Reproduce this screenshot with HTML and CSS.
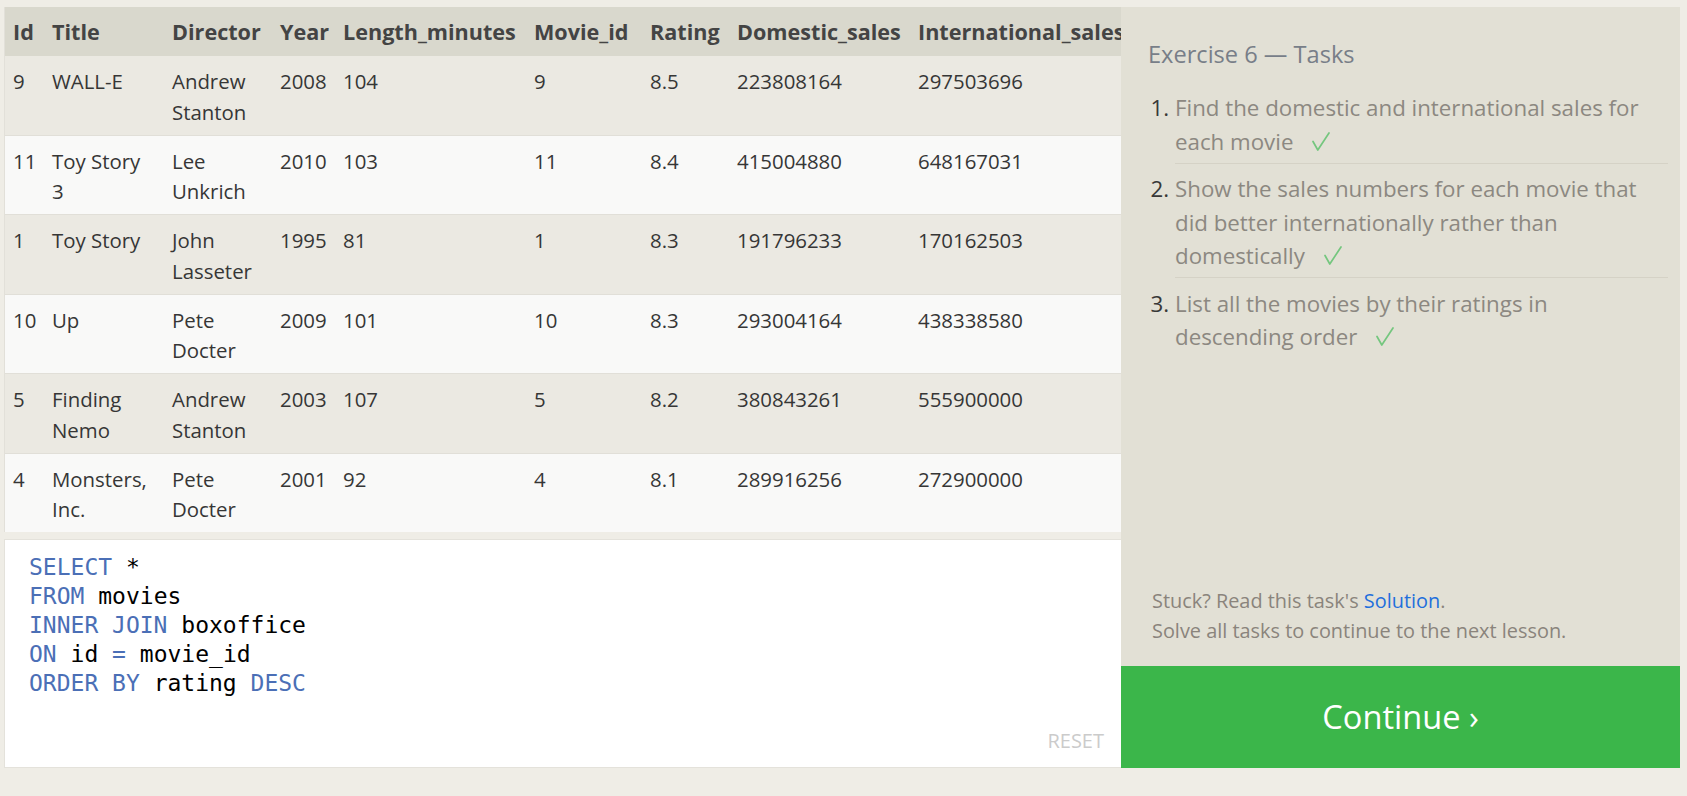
FILE: index.html
```html
<!DOCTYPE html>
<html lang="en">
<head>
<meta charset="utf-8">
<title>SQL Lesson — Exercise 6</title>
<link rel="stylesheet" href="styles.css">
</head>
<body>
<div class="app">
  <main class="workspace">
    <div class="results">
      <table class="results-table">
        <colgroup>
          <col class="c-id"><col class="c-title"><col class="c-director"><col class="c-year"><col class="c-length"><col class="c-movie"><col class="c-rating"><col class="c-dom"><col class="c-intl">
        </colgroup>
        <thead>
          <tr><th>Id</th><th>Title</th><th>Director</th><th>Year</th><th>Length_minutes</th><th>Movie_id</th><th>Rating</th><th>Domestic_sales</th><th>International_sales</th></tr>
        </thead>
        <tbody>
          <tr><td>9</td><td>WALL-E</td><td>Andrew Stanton</td><td>2008</td><td>104</td><td>9</td><td>8.5</td><td>223808164</td><td>297503696</td></tr>
          <tr><td>11</td><td>Toy Story 3</td><td>Lee Unkrich</td><td>2010</td><td>103</td><td>11</td><td>8.4</td><td>415004880</td><td>648167031</td></tr>
          <tr><td>1</td><td>Toy Story</td><td>John Lasseter</td><td>1995</td><td>81</td><td>1</td><td>8.3</td><td>191796233</td><td>170162503</td></tr>
          <tr><td>10</td><td>Up</td><td>Pete Docter</td><td>2009</td><td>101</td><td>10</td><td>8.3</td><td>293004164</td><td>438338580</td></tr>
          <tr><td>5</td><td>Finding Nemo</td><td>Andrew Stanton</td><td>2003</td><td>107</td><td>5</td><td>8.2</td><td>380843261</td><td>555900000</td></tr>
          <tr><td>4</td><td>Monsters, Inc.</td><td>Pete Docter</td><td>2001</td><td>92</td><td>4</td><td>8.1</td><td>289916256</td><td>272900000</td></tr>
        </tbody>
      </table>
    </div>
    <div class="editor">
<pre class="code"><span class="kw">SELECT</span> *
<span class="kw">FROM</span> movies
<span class="kw">INNER JOIN</span> boxoffice
<span class="kw">ON</span> id <span class="kw">=</span> movie_id
<span class="kw">ORDER BY</span> rating <span class="kw">DESC</span></pre>
      <button class="reset" type="button">RESET</button>
    </div>
  </main>
  <aside class="tasks">
    <div class="tasks-body">
      <h2 class="tasks-title">Exercise 6 — Tasks</h2>
      <ol class="task-list">
        <li>Find the domestic and international sales for each movie<span class="check"><svg width="18" height="19" viewBox="0 0 18 19"><polyline points="1,9.5 5.8,18 17,1" fill="none" stroke="#74c67e" stroke-width="1.7" stroke-linejoin="round" stroke-linecap="round"/></svg></span></li>
        <li>Show the sales numbers for each movie that did better internationally rather than domestically<span class="check"><svg width="18" height="19" viewBox="0 0 18 19"><polyline points="1,9.5 5.8,18 17,1" fill="none" stroke="#74c67e" stroke-width="1.7" stroke-linejoin="round" stroke-linecap="round"/></svg></span></li>
        <li>List all the movies by their ratings in descending order<span class="check"><svg width="18" height="19" viewBox="0 0 18 19"><polyline points="1,9.5 5.8,18 17,1" fill="none" stroke="#74c67e" stroke-width="1.7" stroke-linejoin="round" stroke-linecap="round"/></svg></span></li>
      </ol>
      <div class="task-footer">
        <p>Stuck? Read this task's <a class="solution" href="#">Solution</a>.</p>
        <p>Solve all tasks to continue to the next lesson.</p>
      </div>
    </div>
    <button class="continue" type="button">Continue ›</button>
  </aside>
</div>
</body>
</html>
```

FILE: styles.css
```css
* { box-sizing: border-box; }

html, body {
  margin: 0;
  height: 100%;
}

body {
  background: #efede6;
  font-family: "Open Sans", "Noto Sans", sans-serif;
  color: #333;
  overflow: hidden;
}

.app {
  display: flex;
  height: 796px;
  padding: 7px 7px 28px 4px;
}

.workspace {
  flex: 1;
  min-width: 0;
  display: flex;
  flex-direction: column;
  gap: 7px;
}

.results {
  height: 525px;
  overflow: hidden;
  border-left: 1px solid #e2e0d9;
  background: #f9f9f8;
}

.results-table {
  table-layout: fixed;
  width: 1140px;
  border-collapse: collapse;
  font-size: 20.4px;
  line-height: 30.5px;
}

.c-id { width: 39px; }
.c-title { width: 120px; }
.c-director { width: 108px; }
.c-year { width: 63px; }
.c-length { width: 191px; }
.c-movie { width: 116px; }
.c-rating { width: 87px; }
.c-dom { width: 181px; }
.c-intl { width: 235px; }

.results-table th {
  background: #d9d8cd;
  color: #444;
  font-size: 21.6px;
  font-weight: 700;
  text-align: left;
  white-space: nowrap;
  padding: 9.5px 8px 9px;
}

.results-table td {
  vertical-align: top;
  text-align: left;
  color: #363636;
  padding: 10px 8px 7.5px;
  border-bottom: 1px solid #e1dfd8;
}

.results-table tbody tr:nth-child(odd) { background: #ebe9e2; }
.results-table tbody tr:nth-child(even) { background: #f9f9f8; }

.editor {
  flex: 1;
  display: flex;
  flex-direction: column;
  background: #fff;
  border: 1px solid #e4e2db;
  border-right: 0;
}

.code {
  flex: 1;
  margin: 0;
  padding: 12.5px 24px 0;
  font-family: "DejaVu Sans Mono", "Liberation Mono", monospace;
  font-size: 23px;
  line-height: 29px;
  color: #000;
}

.kw { color: #4b6fb6; }

.reset {
  align-self: flex-end;
  margin: 0 17px 14px 0;
  padding: 0;
  border: 0;
  background: none;
  font-family: "Open Sans", "Noto Sans", sans-serif;
  font-size: 20px;
  line-height: 24px;
  color: #cbcbcb;
}

.tasks {
  width: 559px;
  flex: none;
  display: flex;
  flex-direction: column;
  background: #e2e0d5;
}

.tasks-body {
  flex: 1;
  display: flex;
  flex-direction: column;
  padding: 31px 12px 0 27px;
}

.tasks-title {
  margin: 0 0 12.5px;
  font-size: 23.6px;
  line-height: 32px;
  font-weight: 400;
  color: #787e88;
}

.task-list {
  margin: 0;
  padding: 0 0 0 27px;
  font-size: 22.3px;
  line-height: 33.5px;
  color: #8c8881;
}

.task-list li {
  padding: 8.5px 0 4.5px;
  border-bottom: 1px solid #d5d2c6;
}

.task-list li:last-child { border-bottom: 0; }

.task-list li::marker { color: #383838; }

.check {
  display: inline-block;
  margin-left: 19px;
  vertical-align: -1px;
}

.check svg { display: block; }

.task-footer {
  margin-top: auto;
  padding: 0 0 20px 4px;
  font-size: 19.9px;
  line-height: 30px;
  color: #8a847c;
}

.task-footer p { margin: 0; }

.solution {
  color: #1f6fdc;
  text-decoration: none;
}

.continue {
  height: 102px;
  flex: none;
  border: 0;
  margin: 0;
  background: #3bb64a;
  color: #fff;
  font-family: "Open Sans", "Noto Sans", sans-serif;
  font-size: 32.6px;
  line-height: 40px;
}
```
